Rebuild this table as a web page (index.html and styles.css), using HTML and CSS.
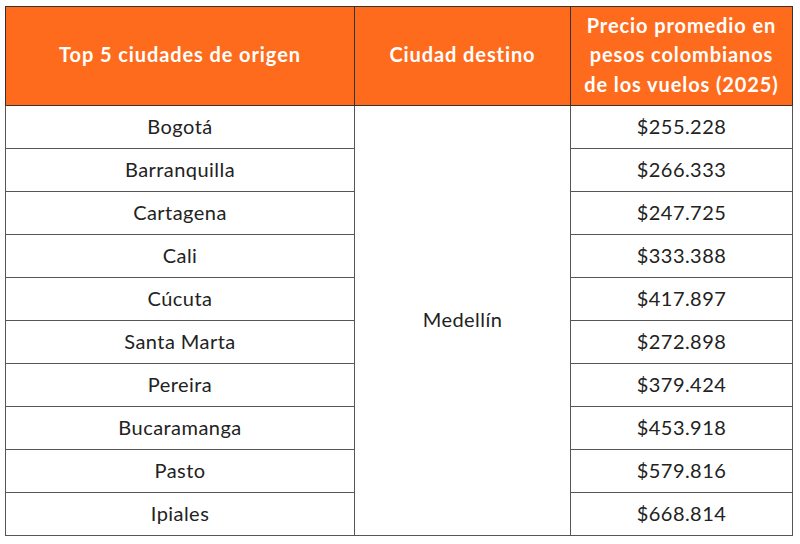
FILE: index.html
```html
<!DOCTYPE html>
<html lang="es">
<head>
<meta charset="utf-8">
<link rel="stylesheet" href="styles.css">
</head>
<body>
<table class="tbl">
  <colgroup>
    <col class="c1"><col class="c2"><col class="c3">
  </colgroup>
  <thead>
    <tr>
      <th>Top 5 ciudades de origen</th>
      <th>Ciudad destino</th>
      <th>Precio promedio en pesos colombianos de los vuelos (2025)</th>
    </tr>
  </thead>
  <tbody>
    <tr><td>Bogotá</td><td class="dest" rowspan="10">Medellín</td><td>$255.228</td></tr>
    <tr><td>Barranquilla</td><td>$266.333</td></tr>
    <tr><td>Cartagena</td><td>$247.725</td></tr>
    <tr><td>Cali</td><td>$333.388</td></tr>
    <tr><td>Cúcuta</td><td>$417.897</td></tr>
    <tr><td>Santa Marta</td><td>$272.898</td></tr>
    <tr><td>Pereira</td><td>$379.424</td></tr>
    <tr><td>Bucaramanga</td><td>$453.918</td></tr>
    <tr><td>Pasto</td><td>$579.816</td></tr>
    <tr><td>Ipiales</td><td>$668.814</td></tr>
  </tbody>
</table>
</body>
</html>
```
FILE: styles.css
```css
html, body {
  margin: 0;
  padding: 0;
  background: #ffffff;
}
body {
  padding: 6px 0 0 5px;
  font-family: "Lato", "Liberation Sans", sans-serif;
  color: #222222;
}
.tbl {
  border-collapse: collapse;
  table-layout: fixed;
  width: 787px;
}
.c1 { width: 349px; }
.c2 { width: 216px; }
.c3 { width: 222px; }
.tbl th {
  background: #ff6b1c;
  color: #ffffff;
  font-weight: 700;
  font-size: 20px;
  letter-spacing: 0.9px;
  line-height: 29.5px;
  height: 96px;
  padding: 0 10px 2px;
  border: 1px solid #333333;
  text-align: center;
  vertical-align: middle;
}
.tbl td {
  font-size: 20px;
  letter-spacing: 0.45px;
  line-height: 24px;
  height: 40px;
  padding: 0 0 2px;
  border: 1px solid #555555;
  text-align: center;
  vertical-align: middle;
}
.tbl td.dest {
  padding-bottom: 4px;
}
```
